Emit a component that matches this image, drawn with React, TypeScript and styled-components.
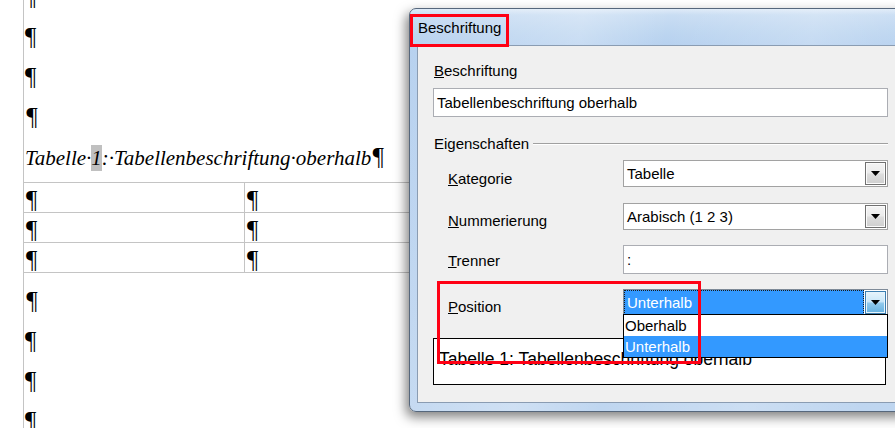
import React from "react";
import styled, { createGlobalStyle } from "styled-components";

const Global = createGlobalStyle`
  html, body { margin: 0; padding: 0; background: #fff; overflow: hidden; }
  #root { width: 895px; height: 428px; }
`;

const Screen = styled.div`
  position: relative;
  width: 895px;
  height: 428px;
  overflow: hidden;
  background: #fff;
`;

/* ---------- document ---------- */

const Page = styled.div`
  margin-left: 23px;
  margin-top: -16px;
  height: 470px;
  border-left: 1px solid #c4c4c4;
  padding-left: 1px;
  font-family: "Liberation Serif", "Times New Roman", serif;
  font-size: 21px;
  color: #000;
`;

const Para = styled.div<{ $italic?: boolean; $h?: number }>`
  height: ${(p) => p.$h ?? 40}px;
  line-height: 26px;
  white-space: nowrap;
  font-style: ${(p) => (p.$italic ? "italic" : "normal")};
`;

const Mark = styled.span`
  font-size: 25px;
  line-height: 26px;
  vertical-align: baseline;
`;

const Field = styled.span`
  display: inline-block;
  background: #c0c0c0;
  line-height: 26px;
`;

const DocTable = styled.div`
  width: 466px;
  margin-left: -1px;
  border-top: 1px solid #c4c4c4;
  margin-bottom: 15px;
`;

const DocRow = styled.div`
  display: grid;
  grid-template-columns: 221px 1fr;
  height: 29px;
  border-bottom: 1px solid #c4c4c4;
`;

const DocCell = styled.div<{ $first?: boolean }>`
  padding-top: 4px;
  padding-left: 2px;
  line-height: 26px;
  height: 29px;
  box-sizing: border-box;
  overflow: visible;
  border-right: ${(p) => (p.$first ? "1px solid #c4c4c4" : "none")};
`;

/* ---------- dialog ---------- */

const Window = styled.div`
  position: absolute;
  left: 409px;
  top: 8px;
  width: 512px;
  box-sizing: border-box;
  border: 1px solid #56677c;
  border-radius: 7px 7px 0 7px;
  padding: 0 8px 8px 7px;
  background:
    linear-gradient(100deg, rgba(255,255,255,0) 0%, rgba(255,255,255,0.25) 30%, rgba(255,255,255,0) 45%, rgba(255,255,255,0.2) 70%, rgba(255,255,255,0) 90%),
    linear-gradient(180deg, #dfebf8 0px, #c9ddf3 6px, #bcd5f0 24px, #b7d1ef 36px, #bfd6f0 100%);
  box-shadow: -3px 5px 12px rgba(0, 0, 0, 0.5);
  font-family: "Liberation Sans", Arial, sans-serif;
  color: #000;
`;

const TitleBar = styled.div`
  height: 36px;
  display: flex;
  align-items: center;
  padding-left: 1px;
  font-size: 15px;
`;

const Panel = styled.div`
  background: #f0f0f0;
  border: 1px solid #8a9cb2;
  padding: 15px 23px 17px 15px;
  display: flex;
  flex-direction: column;
  font-size: 15px;
`;

const Label = styled.div`
  line-height: 20px;
  padding-left: 1px;
`;

const TextBox = styled.div<{ $mt?: number }>`
  margin-top: ${(p) => p.$mt ?? 0}px;
  height: 29px;
  box-sizing: border-box;
  border: 1px solid #abadb3;
  background: #fff;
  padding-left: 3px;
  line-height: 27px;
  white-space: nowrap;
`;

const GroupHeader = styled.div`
  margin-top: 17px;
  display: flex;
  align-items: center;
  line-height: 20px;
  padding-left: 1px;
`;

const GroupLine = styled.div`
  flex: 1;
  margin-left: 4px;
  border-top: 1px solid #a0a0a0;
  border-bottom: 1px solid #fff;
`;

const FieldRow = styled.div<{ $mt: number }>`
  margin-top: ${(p) => p.$mt}px;
  display: grid;
  grid-template-columns: 190px 1fr;
  align-items: center;
`;

/* $drop moves the label text down without changing the row height */
const RowLabel = styled.div<{ $drop: number }>`
  padding-left: 15px;
  margin-top: ${(p) => p.$drop}px;
  margin-bottom: ${(p) => -p.$drop}px;
  line-height: 20px;
`;

const Select = styled.div<{ $focus?: boolean }>`
  position: relative;
  height: 27px;
  box-sizing: border-box;
  border: 1px solid ${(p) => (p.$focus ? "#7f8b98" : "#a2a2a2")};
  background: #fff;
  display: flex;
`;

const SelectValue = styled.div<{ $focus?: boolean }>`
  flex: 1;
  box-sizing: border-box;
  padding-left: ${(p) => (p.$focus ? 2 : 3)}px;
  line-height: ${(p) => (p.$focus ? 23 : 25)}px;
  margin: ${(p) => (p.$focus ? "0 1px 0 0" : "0")};
  background: ${(p) => (p.$focus ? "#3399ff" : "transparent")};
  color: ${(p) => (p.$focus ? "#fff" : "#000")};
  border: ${(p) => (p.$focus ? "1px dotted #1a1a1a" : "none")};
  white-space: nowrap;
`;

const DropButton = styled.div<{ $hover?: boolean }>`
  width: 21px;
  margin: 1px 1px 1px 0;
  box-sizing: border-box;
  border: 1px solid ${(p) => (p.$hover ? "#3c7fb1" : "#707070")};
  box-shadow: inset 0 0 0 1px ${(p) => (p.$hover ? "#e6f4fc" : "#fbfbfb")};
  background: ${(p) =>
    p.$hover
      ? "linear-gradient(180deg, #e6f4fc 0%, #cbe8f9 45%, #8fc8ec 55%, #64b0df 100%)"
      : "linear-gradient(180deg, #f4f4f4 0%, #ececec 45%, #dcdcdc 55%, #cfcfcf 100%)"};
  display: flex;
  justify-content: center;
  padding-top: 8px;
`;

const DropList = styled.div`
  position: absolute;
  left: -1px;
  right: -1px;
  top: 24px;
  border: 1px solid #000;
  background: #fff;
  z-index: 2;
`;

const DropItem = styled.div<{ $active?: boolean }>`
  height: 21px;
  line-height: 21px;
  padding-left: 1px;
  background: ${(p) => (p.$active ? "#3399ff" : "#fff")};
  color: ${(p) => (p.$active ? "#fff" : "#000")};
`;

const Preview = styled.div`
  margin-top: 22px;
  margin-right: 2px;
  height: 47px;
  box-sizing: border-box;
  border: 1px solid #000;
  background: #fff;
  padding: 9px 5px 0;
  font-size: 17.5px;
  line-height: 22px;
  white-space: nowrap;
  overflow: hidden;
`;

const Marker = styled.div<{ $x: number; $y: number; $w: number; $h: number }>`
  position: absolute;
  left: ${(p) => p.$x}px;
  top: ${(p) => p.$y}px;
  width: ${(p) => p.$w}px;
  height: ${(p) => p.$h}px;
  box-sizing: border-box;
  border: 3px solid #ff0014;
  z-index: 5;
  pointer-events: none;
`;

const Arrow = () => (
  <svg width="9" height="5" viewBox="0 0 9 5">
    <path d="M0 0 H9 L4.5 5 Z" fill="#000" />
  </svg>
);

const Key: React.FC<{ k: string; rest: string }> = ({ k, rest }) => (
  <>
    <u>{k}</u>
    {rest}
  </>
);

export default function App() {
  return (
    <Screen>
      <Global />
      <Page>
        <Para><Mark>¶</Mark></Para>
        <Para><Mark>¶</Mark></Para>
        <Para><Mark>¶</Mark></Para>
        <Para $italic><Mark>¶</Mark></Para>
        <Para $italic $h={38}>
          Tabelle·<Field>1</Field>:·Tabellenbeschriftung·oberhalb<Mark>¶</Mark>
        </Para>
        <DocTable>
          {[0, 1, 2].map((i) => (
            <DocRow key={i}>
              <DocCell $first><Mark>¶</Mark></DocCell>
              <DocCell><Mark>¶</Mark></DocCell>
            </DocRow>
          ))}
        </DocTable>
        <Para $italic><Mark>¶</Mark></Para>
        <Para><Mark>¶</Mark></Para>
        <Para><Mark>¶</Mark></Para>
        <Para><Mark>¶</Mark></Para>
      </Page>

      <Window>
        <TitleBar>Beschriftung</TitleBar>
        <Panel>
          <Label>
            <Key k="B" rest="eschriftung" />
          </Label>
          <TextBox $mt={7}>Tabellenbeschriftung oberhalb</TextBox>
          <GroupHeader>
            Eigenschaften
            <GroupLine />
          </GroupHeader>

          <FieldRow $mt={6}>
            <RowLabel $drop={5}>
              <Key k="K" rest="ategorie" />
            </RowLabel>
            <Select>
              <SelectValue>Tabelle</SelectValue>
              <DropButton>
                <Arrow />
              </DropButton>
            </Select>
          </FieldRow>

          <FieldRow $mt={16}>
            <RowLabel $drop={4}>
              <Key k="N" rest="ummerierung" />
            </RowLabel>
            <Select>
              <SelectValue>Arabisch (1 2 3)</SelectValue>
              <DropButton>
                <Arrow />
              </DropButton>
            </Select>
          </FieldRow>

          <FieldRow $mt={15}>
            <RowLabel $drop={1}>
              <Key k="T" rest="renner" />
            </RowLabel>
            <TextBox>:</TextBox>
          </FieldRow>

          <FieldRow $mt={15}>
            <RowLabel $drop={4}>
              <Key k="P" rest="osition" />
            </RowLabel>
            <Select $focus>
              <SelectValue $focus>Unterhalb</SelectValue>
              <DropButton $hover>
                <Arrow />
              </DropButton>
              <DropList>
                <DropItem>Oberhalb</DropItem>
                <DropItem $active>Unterhalb</DropItem>
              </DropList>
            </Select>
          </FieldRow>

          <Preview>Tabelle 1: Tabellenbeschriftung oberhalb</Preview>
        </Panel>
      </Window>

      <Marker $x={410} $y={14} $w={99} $h={33} />
      <Marker $x={437} $y={281} $w={264} $h={83} />
    </Screen>
  );
}
